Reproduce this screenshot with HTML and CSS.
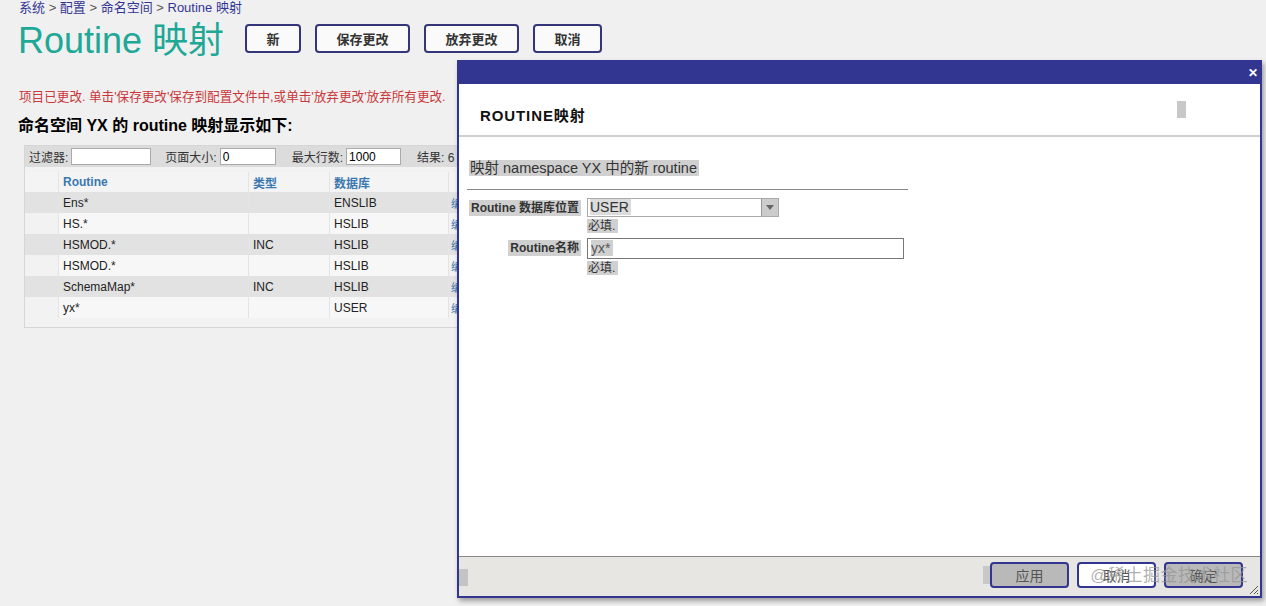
FILE: index.html
```html
<!DOCTYPE html>
<html lang="zh">
<head>
<meta charset="utf-8">
<title>Routine 映射</title>
<link rel="stylesheet" href="styles.css">
</head>
<body>
<div class="page">
  <div class="crumbs">系统 <span class="sep">&gt;</span> 配置 <span class="sep">&gt;</span> 命名空间 <span class="sep">&gt;</span> Routine 映射</div>
  <div class="titlebar">
    <h1 class="title">Routine 映射</h1>
    <div class="actions">
      <button class="btn btn-new">新</button>
      <button class="btn btn-wide">保存更改</button>
      <button class="btn btn-wide">放弃更改</button>
      <button class="btn btn-cancel">取消</button>
    </div>
  </div>
  <p class="notice">项目已更改. 单击'保存更改'保存到配置文件中,或单击'放弃更改'放弃所有更改.</p>
  <h2 class="subhead">命名空间 YX 的 routine 映射显示如下:</h2>
  <div class="tablebox">
    <div class="filterbar">
      <label class="flabel">过滤器:</label><input class="finput f1" value="">
      <label class="flabel l2">页面大小:</label><input class="finput f2" value="0">
      <label class="flabel l3">最大行数:</label><input class="finput f3" value="1000">
      <span class="flabel l4">结果: 6</span>
    </div>
    <table class="grid">
      <thead>
        <tr><th class="c0"></th><th class="c1">Routine</th><th class="c2">类型</th><th class="c3">数据库</th><th class="c4"></th></tr>
      </thead>
      <tbody>
        <tr class="odd"><td></td><td>Ens*</td><td></td><td>ENSLIB</td><td class="lnk">编</td></tr>
        <tr><td></td><td>HS.*</td><td></td><td>HSLIB</td><td class="lnk">编</td></tr>
        <tr class="odd"><td></td><td>HSMOD.*</td><td>INC</td><td>HSLIB</td><td class="lnk">编</td></tr>
        <tr><td></td><td>HSMOD.*</td><td></td><td>HSLIB</td><td class="lnk">编</td></tr>
        <tr class="odd"><td></td><td>SchemaMap*</td><td>INC</td><td>HSLIB</td><td class="lnk">编</td></tr>
        <tr><td></td><td>yx*</td><td></td><td>USER</td><td class="lnk">编</td></tr>
      </tbody>
    </table>
  </div>
</div>

<div class="modal">
  <div class="mhead"><span class="close">✕</span></div>
  <div class="mbody">
    <div class="mtitle"><span>ROUTINE映射</span><span class="stub"></span></div>
    <div class="mcontent">
      <div class="mdesc"><span class="hl">映射 namespace YX 中的新 routine</span></div>
      <div class="form">
        <div class="frow">
          <div class="fl"><span class="hl">Routine 数据库位置</span></div>
          <div class="fc">
            <div class="select"><span class="hl">USER</span><span class="arrow"><svg width="8" height="5" viewBox="0 0 8 5"><path d="M0 0H8L4 5Z" fill="#666"/></svg></span></div>
            <div class="req"><span class="hl">必填.</span></div>
          </div>
        </div>
        <div class="frow">
          <div class="fl"><span class="hl">Routine名称</span></div>
          <div class="fc">
            <div class="text"><span class="hl">yx*</span></div>
            <div class="req"><span class="hl">必填.</span></div>
          </div>
        </div>
      </div>
    </div>
  </div>
  <div class="mfoot">
    <span class="stub2"></span>
    <div class="mbtns">
      <span class="stub3"></span>
      <button class="mbtn gray">应用</button>
      <button class="mbtn white">取消</button>
      <button class="mbtn gray">确定</button>
    </div>
    <svg class="grip" width="12" height="12" viewBox="0 0 12 12"><path d="M11 3L3 11M11 7L7 11M11 10L10 11" stroke="#555" stroke-width="1"/></svg>
  </div>
  <div class="watermark">@稀土掘金技术社区</div>
</div>
</body>
</html>
```

FILE: styles.css
```css
html, body {
  margin: 0;
  padding: 0;
}
body {
  background: #f0f0f0;
  font-family: "Liberation Sans", Arial, "Noto Sans CJK SC", sans-serif;
  color: #000;
  width: 1266px;
  height: 606px;
  overflow: hidden;
  position: relative;
}
.page {
  padding: 0 0 0 18px;
}
.crumbs {
  font-size: 13px;
  color: #333695;
  padding-top: 0;
  padding-left: 1px;
  height: 16px;
  line-height: 15px;
}
.crumbs .sep { color: #555; }
.titlebar {
  display: flex;
  align-items: flex-start;
  height: 46px;
}
.title {
  margin: 3px 0 0 0;
  font-weight: normal;
  font-size: 36px;
  line-height: 44px;
  color: #20a897;
  width: 227px;
}
.actions {
  display: flex;
  gap: 14px;
  padding-top: 8px;
}
.btn {
  height: 29px;
  border: 2px solid #35357a;
  border-radius: 4px;
  background: #fafafa;
  font-family: "Liberation Sans", Arial, "Noto Sans CJK SC", sans-serif;
  font-size: 13px;
  font-weight: bold;
  color: #333;
  padding: 0;
}
.btn-new { width: 56px; }
.btn-wide { width: 95px; }
.btn-cancel { width: 69px; }
.notice {
  margin: 0;
  padding-top: 27px;
  padding-left: 1px;
  font-size: 12.6px;
  color: #c9383a;
  line-height: 16px;
  white-space: nowrap;
}
.subhead {
  margin: 0;
  padding-top: 12px;
  font-size: 16px;
  font-weight: bold;
  line-height: 18px;
  color: #000;
}
.tablebox {
  margin-top: 10px;
  margin-left: 6px;
  width: 440px;
  overflow: hidden;
  background: #f2f2f2;
  border: 1px solid #d6d6d6;
  border-right: none;
  padding-bottom: 9px;
}
.filterbar {
  background: #dcdcdc;
  height: 21px;
  display: flex;
  align-items: center;
  font-size: 12px;
  color: #333;
  padding-left: 4px;
}
.flabel { white-space: nowrap; }
.finput {
  height: 17px;
  box-sizing: border-box;
  border: 1px solid #aaa;
  background: #fff;
  font-family: "Liberation Sans", Arial, sans-serif;
  font-size: 12px;
  padding: 0 2px;
  margin-left: 3px;
}
.f1 { width: 80px; }
.f2 { width: 56px; }
.f3 { width: 55px; }
.l2 { margin-left: 14px; }
.l3 { margin-left: 16px; }
.l4 { margin-left: 16px; }
.grid {
  border-collapse: collapse;
  font-size: 12px;
  margin-top: 5px;
  width: 440px;
  table-layout: fixed;
}
.grid th, .grid td {
  height: 21px;
  padding: 0 0 0 4px;
  text-align: left;
  white-space: nowrap;
  overflow: hidden;
  border-left: 1px solid #e4e4e4;
}
.grid th {
  color: #3a78b0;
  font-weight: bold;
  height: 20px;
  background: #f4f4f4;
}
.grid th.c0, .grid td:first-child { border-left: none; }
.c0 { width: 29px; }
.c1 { width: 185px; }
.c2 { width: 76px; }
.c3 { width: 114px; }
.grid td { color: #222; background: #f7f7f7; }
.grid tr.odd td { background: #e2e2e2; }
.grid td:first-child { background: #f2f2f2; }
.grid tr.odd td:first-child { background: #e2e2e2; }
.grid td.lnk { color: #3a78b0; font-size: 11px; padding-left: 2px; background: #f2f2f2; }

/* modal */
.modal {
  position: absolute;
  left: 457px;
  top: 60px;
  width: 801px;
  height: 534px;
  border: 2px solid #333690;
  background: #fff;
  box-shadow: 2px 3px 5px rgba(0,0,0,0.35);
  display: flex;
  flex-direction: column;
}
.mhead {
  height: 22px;
  background: #333690;
  display: flex;
  justify-content: flex-end;
  align-items: center;
  padding-right: 2px;
}
.close {
  color: #fff;
  font-weight: bold;
  font-size: 12px;
  line-height: 12px;
}
.mbody {
  flex: 1;
  background: #fff;
}
.mtitle {
  border-bottom: 2px solid #cfcfcf;
  display: flex;
  align-items: center;
  padding-left: 21px;
  font-size: 15px;
  font-weight: bold;
  color: #111;
  letter-spacing: 0.9px;
  padding-top: 9px;
  box-sizing: border-box;
  height: 53px;
}
.stub {
  display: inline-block;
  width: 9px;
  height: 17px;
  background: #c8c8c8;
  margin-left: 591px;
  margin-top: -10px;
}
.mcontent {
  padding: 21px 0 0 8px;
}
.hl {
  background: #d0d0d0;
}
.mdesc {
  font-size: 14.5px;
  color: #333;
  line-height: 20px;
  width: 441px;
  border-bottom: 1px solid #888;
  padding: 0 0 11px 2px;
  box-sizing: border-box;
}
.mdesc .hl { padding: 0 2px 0 1px; }
.form {
  padding-top: 8px;
}
.frow {
  display: flex;
  margin-bottom: 4px;
}
.fl {
  width: 114px;
  text-align: right;
  font-size: 12px;
  font-weight: bold;
  color: #333;
  line-height: 18px;
  padding-top: 1px;
  box-sizing: border-box;
  padding-left: 2px;
}
.fl .hl { padding: 1px 2px; }
.fc {
  margin-left: 6px;
  font-size: 12px;
}
.select {
  width: 192px;
  height: 19px;
  border: 1px solid #aaa;
  box-sizing: border-box;
  position: relative;
  font-size: 14px;
  line-height: 17px;
  padding-left: 2px;
  color: #333;
}
.select .hl { background: #dcdcdc; padding-right: 2px; }
.arrow {
  position: absolute;
  right: 0;
  top: 0;
  width: 16px;
  height: 17px;
  background: #ccc;
  border-left: 1px solid #999;
  display: flex;
  align-items: center;
  justify-content: center;
}
.req {
  color: #333;
  line-height: 15px;
  height: 15px;
  margin-top: 2px;
}
.req .hl { padding: 0 3px 0 1px; }
.text {
  width: 317px;
  height: 21px;
  border: 1px solid #777;
  box-sizing: border-box;
  font-size: 14px;
  line-height: 19px;
  padding-left: 3px;
  color: #555;
}
.text .hl { padding-right: 3px; }
.mfoot {
  height: 39px;
  border-top: 1px solid #888;
  background: #e7e6e3;
  display: flex;
  align-items: center;
  position: relative;
}
.stub2 {
  width: 9px;
  height: 17px;
  background: #c4c4c4;
  margin-top: 2px;
}
.mbtns {
  margin-left: auto;
  display: flex;
  align-items: center;
  gap: 8px;
  padding-right: 17px;
  margin-top: -3px;
}
.stub3 {
  width: 7px;
  height: 18px;
  background: #c8c8c8;
  margin-right: -8px;
}
.mbtn {
  width: 79px;
  height: 26px;
  border: 2px solid #333690;
  border-radius: 4px;
  font-family: "Liberation Sans", Arial, "Noto Sans CJK SC", sans-serif;
  font-size: 14px;
  color: #555;
  padding: 0;
}
.mbtn.gray { background: #b9b9b9; }
.mbtn.white { background: #fff; }
.grip {
  position: absolute;
  right: 1px;
  bottom: 1px;
}
.watermark {
  position: absolute;
  right: 12px;
  bottom: 10px;
  font-size: 17px;
  color: rgba(150,150,150,0.75);
  letter-spacing: 0.5px;
  pointer-events: none;
}
```
